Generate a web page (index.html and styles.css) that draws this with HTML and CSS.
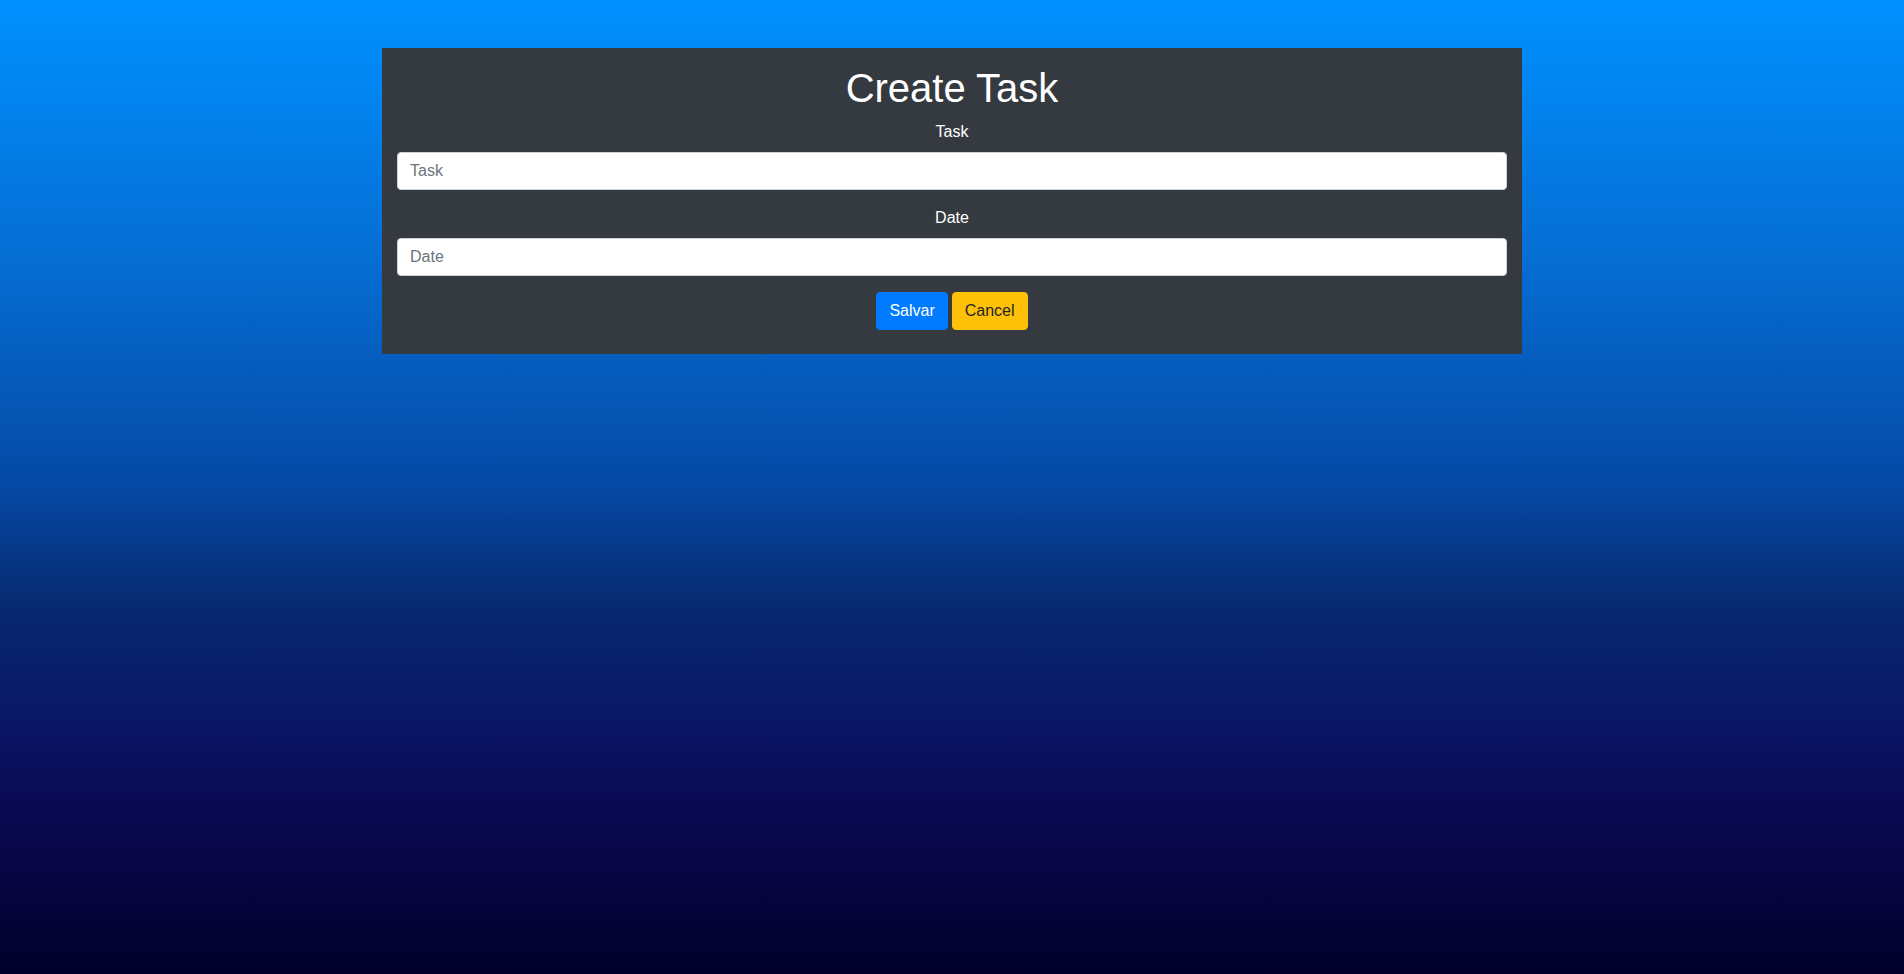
FILE: index.html
```html
<!DOCTYPE html>
<html lang="en">
<head>
<meta charset="utf-8">
<title>Create Task</title>
<link rel="stylesheet" href="styles.css">
</head>
<body>
<main class="container">
  <section class="card">
    <h1 class="title">Create Task</h1>
    <form class="form">
      <div class="form-group">
        <label class="label" for="task">Task</label>
        <input class="input" id="task" type="text" placeholder="Task">
      </div>
      <div class="form-group">
        <label class="label" for="date">Date</label>
        <input class="input" id="date" type="text" placeholder="Date">
      </div>
      <div class="actions">
        <button type="button" class="btn btn-primary">Salvar</button>
        <button type="button" class="btn btn-warning">Cancel</button>
      </div>
    </form>
  </section>
</main>
</body>
</html>
```
FILE: styles.css
```css
* { box-sizing: border-box; }
html, body { margin: 0; height: 100%; }
body {
  font-family: "Liberation Sans", Arial, sans-serif;
  font-size: 16px;
  line-height: 1.5;
  color: #fff;
  background: linear-gradient(to bottom, #0091ff 0%, #0570d6 25%, #0549a5 50%, #072a70 62%, #0a1666 74%, #0a0850 84%, #01002a 100%);
  min-height: 974px;
}
.container {
  width: 1140px;
  margin: 0 auto;
  padding-top: 48px;
}
.card {
  background: #343a40;
  padding: 16px 15px 24px;
  text-align: center;
}
.title {
  margin: 0 0 8px;
  font-size: 40px;
  font-weight: 400;
  line-height: 1.2;
}
.form { margin: 0; }
.form-group { margin-bottom: 16px; }
.label {
  display: block;
  margin-bottom: 8px;
}
.input {
  display: block;
  width: 100%;
  height: 38px;
  padding: 6px 12px;
  font-family: inherit;
  font-size: 16px;
  line-height: 1.5;
  color: #495057;
  background: #fff;
  border: 1px solid #ced4da;
  border-radius: 4px;
}
.input::placeholder { color: #6c757d; }
.actions {
  display: flex;
  justify-content: center;
  gap: 4px;
}
.btn {
  font-family: inherit;
  font-size: 16px;
  line-height: 1.5;
  padding: 6px 12px;
  border: 1px solid transparent;
  border-radius: 4px;
  cursor: pointer;
}
.btn-primary { background: #007bff; border-color: #007bff; color: #fff; }
.btn-warning { background: #ffc107; border-color: #ffc107; color: #212529; }
```
